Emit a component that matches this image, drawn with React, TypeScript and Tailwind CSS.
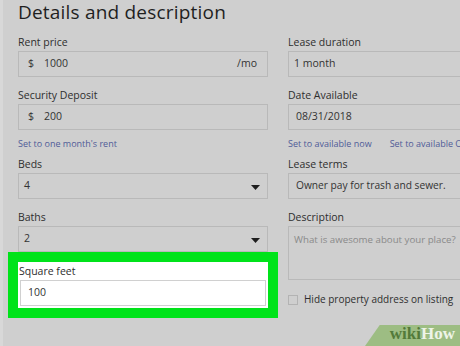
import React from 'react'

const font = { fontFamily: '"Open Sans", "Liberation Sans", sans-serif' }

const Label = ({ text }: { text: string }) => (
  <div className="h-[14px] mb-[2px] text-[10.5px] leading-[14px] text-[#2e2e2e]">{text}</div>
)

const Arrow = () => (
  <svg width="9" height="5" viewBox="0 0 9 5" className="absolute right-[7px] top-[11px]">
    <path d="M0 0 H9 L4.5 5 Z" fill="#1e1e1e" />
  </svg>
)

const Box: React.FC<{ children?: React.ReactNode; className?: string }> = ({ children, className }) => (
  <div
    className={`relative flex items-center h-[26px] border border-[#b9b9b9] px-[9px] text-[10.5px] text-[#333] ${className ?? ''}`}
  >
    {children}
  </div>
)

export default function App() {
  return (
    <div style={font} className="relative w-[460px] h-[346px] overflow-hidden bg-[#cfcfcf]">
      <div className="absolute left-0 top-0 bottom-0 w-[3px] bg-[#d8d8d8]" />
      <h1 className="pl-[18px] h-[35px] text-[19px] leading-[24px] font-medium text-[#1f1f1f] tracking-[0.2px]">
        Details and description
      </h1>
      <div className="flex gap-[20px] pl-[18px]">
        <div className="w-[250px] shrink-0 flex flex-col">
          <Label text="Rent price" />
          <Box>
            <span>$</span>
            <span className="ml-[10px]">1000</span>
            <span className="ml-auto mr-[1px]">/mo</span>
          </Box>
          <div className="h-[11px]" />
          <Label text="Security Deposit" />
          <Box>
            <span>$</span>
            <span className="ml-[10px]">200</span>
          </Box>
          <div className="h-[27px] flex items-center text-[9px] text-[#4f5c98]">Set to one month's rent</div>
          <Label text="Beds" />
          <Box>
            <span className="-ml-[4px]">4</span>
            <Arrow />
          </Box>
          <div className="h-[11px]" />
          <Label text="Baths" />
          <Box>
            <span className="-ml-[4px]">2</span>
            <Arrow />
          </Box>
          <div className="-mx-[10px] border-[10px] border-[#00e31a] bg-white pt-[2px] pb-[2px] px-[1px]">
            <Label text="Square feet" />
            <Box className="bg-white border-[#d0d0d0] mx-[1px]">
              <span className="-ml-[2px]">100</span>
            </Box>
          </div>
        </div>
        <div className="w-[250px] shrink-0 flex flex-col">
          <Label text="Lease duration" />
          <Box>
            <span className="-ml-[4px]">1 month</span>
          </Box>
          <div className="h-[11px]" />
          <Label text="Date Available" />
          <Box>
            <span className="-ml-[2px]">08/31/2018</span>
          </Box>
          <div className="h-[27px] flex items-center gap-[18px] whitespace-nowrap text-[9px] text-[#4f5c98]">
            <span>Set to available now</span>
            <span>Set to available One month</span>
          </div>
          <Label text="Lease terms" />
          <Box>
            <span className="-ml-[2px] text-[10.2px]">Owner pay for trash and sewer.</span>
          </Box>
          <div className="h-[11px]" />
          <Label text="Description" />
          <div className="h-[54px] border border-[#b9b9b9] px-[5px] pt-[6px] text-[9.7px] text-[#8a8a8a] whitespace-nowrap">
            What is awesome about your place?
          </div>
          <div className="flex items-center h-[40px] gap-[6px] pb-[1px]">
            <div className="w-[10px] h-[10px] border border-[#b3b3b3]" />
            <span className="text-[10px] text-[#2e2e2e]">Hide property address on listing</span>
          </div>
        </div>
      </div>
      <div className="absolute right-[-10px] bottom-0 h-[21px] w-[105px] bg-[#9dbd83] -skew-x-[35deg] origin-bottom-left" />
      <div
        className="absolute right-[5px] bottom-[3px] text-[17px] leading-[18px] font-bold"
        style={{ fontFamily: '"Liberation Serif", "DejaVu Serif", serif' }}
      >
        <span className="text-[#537a3a]">wiki</span>
        <span className="text-[#eef4e8]">How</span>
      </div>
    </div>
  )
}
